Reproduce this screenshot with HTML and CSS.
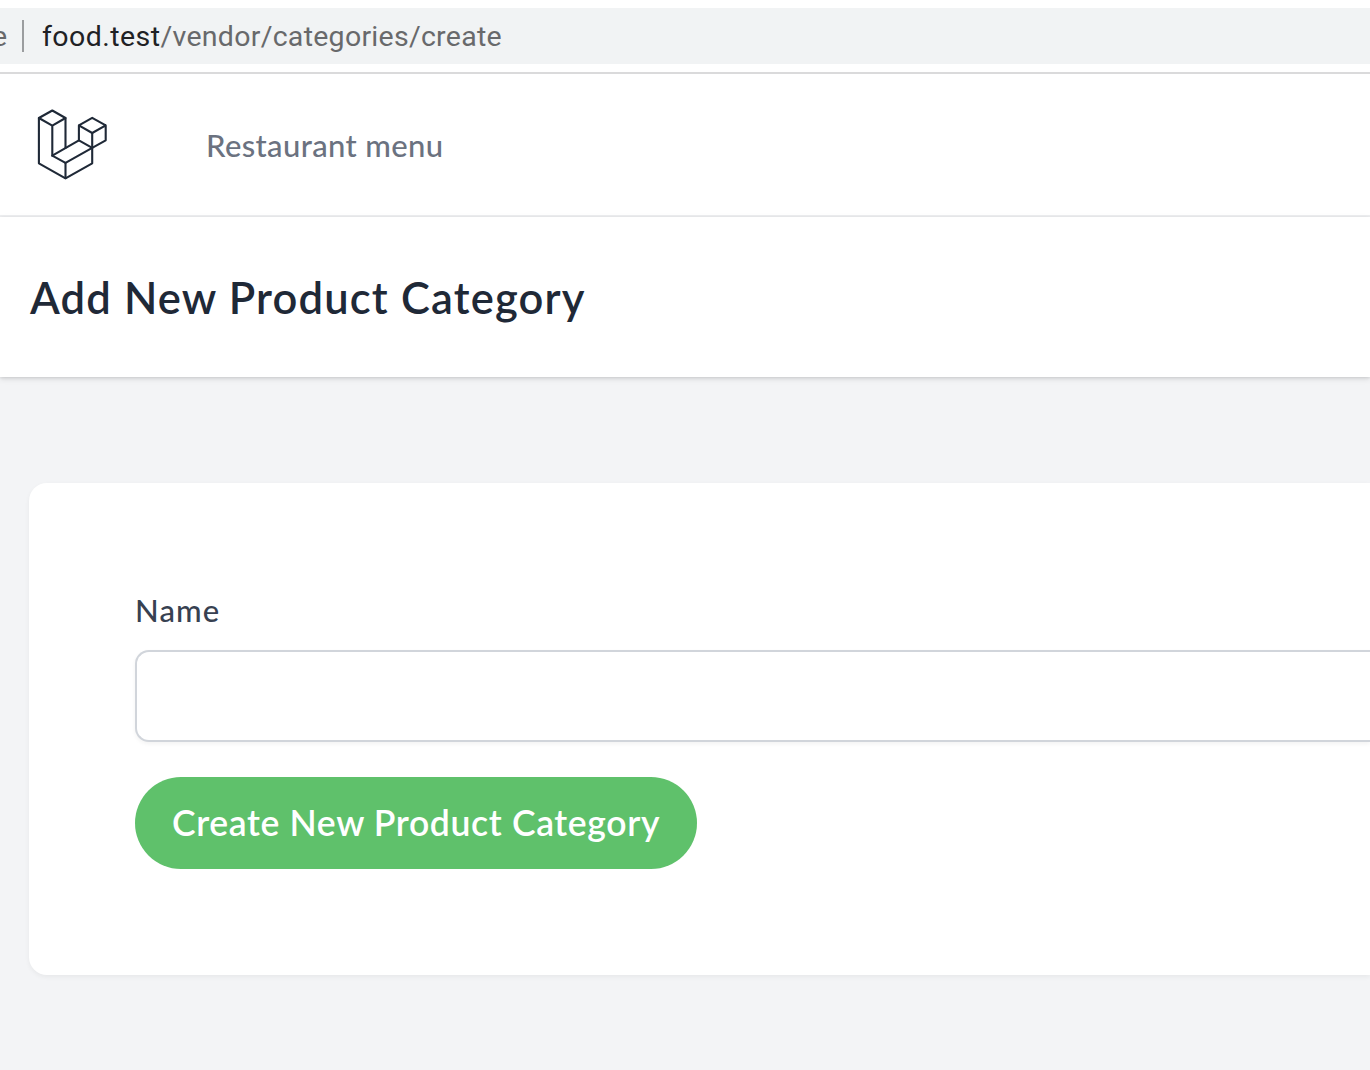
FILE: index.html
```html
<!DOCTYPE html>
<html lang="en">
<head>
<meta charset="utf-8">
<title>Add New Product Category</title>
<link rel="stylesheet" href="styles.css">
</head>
<body>
<div class="toolbar">
  <div class="address"><span class="security">e</span><span class="divider"></span><span class="url"><span class="host">food.test</span>/vendor/categories/create</span></div>
</div>
<nav class="nav">
  <svg class="logo" viewBox="36 108 72 72" fill="none" stroke="#1f2937" stroke-width="2.1" stroke-linejoin="round" stroke-linecap="round">
    <path d="M65.5 148V118L52.3 110.5 38.9 118V163.3L65.5 178.3 92.2 163.3V133"/>
    <path d="M38.9 118 52.3 125.7 65.5 118M52.3 125.7V155.7L65.5 162.9V178.3"/>
    <path d="M52.3 155.7 78.9 140.3 92.2 147.8 65.5 162.9"/>
    <path d="M78.9 140.3V125.3L92.2 117.8 105.7 125.3V140.3L92.2 147.8M78.9 125.3 92.2 133 105.7 125.3"/>
  </svg>
  <a class="nav-link">Restaurant menu</a>
</nav>
<header class="page-header"><h1 class="title">Add New Product Category</h1></header>
<main class="main">
  <form class="card">
    <label class="label" for="name">Name</label>
    <input class="input" id="name" type="text">
    <button class="button" type="button">Create New Product Category</button>
  </form>
</main>
</body>
</html>
```
FILE: styles.css
```css
* { box-sizing: border-box; }
body {
  margin: 0;
  height: 1070px;
  overflow: hidden;
  display: flex;
  flex-direction: column;
  background: #f3f4f6;
  font-family: Lato, "Liberation Sans", sans-serif;
}
.toolbar {
  flex: none;
  height: 74px;
  padding-top: 8px;
  background: #fff;
  border-bottom: 2px solid #dadadb;
}
.address {
  height: 56px;
  display: flex;
  align-items: center;
  background: #f1f3f4;
  color: #68696b;
  font: 28.5px/56px Roboto, sans-serif;
}
.security { width: 22px; flex: none; margin-left: -8px; padding-top: 2px; }
.divider { width: 2px; height: 32px; margin-left: 8px; background: #9b9d9f; }
.url { margin-left: 18px; padding-top: 2px; letter-spacing: 0.27px; white-space: nowrap; }
.host { color: #202124; letter-spacing: 0.45px; }
.nav {
  flex: none;
  height: 143px;
  display: flex;
  align-items: center;
  padding: 0 36px;
  background: #fff;
  border-bottom: 2px solid #eeeff1;
}
.logo { width: 72px; height: 72px; flex: none; margin-bottom: 2px; }
.nav-link { margin-left: 98px; padding-top: 1px; font-size: 31px; line-height: 40px; letter-spacing: 0.37px; color: #6b7280; font-weight: 500; }
.page-header {
  flex: none;
  height: 160px;
  display: flex;
  align-items: center;
  padding: 0 30px;
  background: #fff;
  box-shadow: 0 2px 6px rgba(0,0,0,.1), 0 1px 3px rgba(0,0,0,.1);
}
.title { margin: 0; font-size: 43.5px; line-height: 56px; font-weight: 600; letter-spacing: 1.17px; color: #1f2937; white-space: nowrap; }
.main { padding: 106px 0 0 29px; }
.card {
  height: 492px;
  padding: 106px 0 0 106px;
  display: flex;
  flex-direction: column;
  align-items: flex-start;
  background: #fff;
  border-radius: 18px 0 0 18px;
  box-shadow: 0 2px 5px rgba(0,0,0,.05);
}
.label { height: 44px; font-size: 31px; line-height: 42px; font-weight: 500; letter-spacing: 1.1px; color: #374151; }
.input {
  width: 100%;
  height: 92px;
  margin: 17px 0 0;
  padding: 0 24px;
  font: inherit;
  font-size: 35px;
  background: #fff;
  border: 2px solid #d1d5db;
  border-right: 0;
  border-radius: 14px 0 0 14px;
  box-shadow: 0 2px 4px rgba(0,0,0,.05);
}
.button {
  width: 562px;
  height: 92px;
  margin: 35px 0 0;
  padding: 0 0 0 37px;
  border: 0;
  border-radius: 46px;
  background: #5fc16b;
  color: #fff;
  font: 600 35.5px/92px Lato, sans-serif;
  letter-spacing: 0.65px;
  text-align: left;
  white-space: nowrap;
}
```
